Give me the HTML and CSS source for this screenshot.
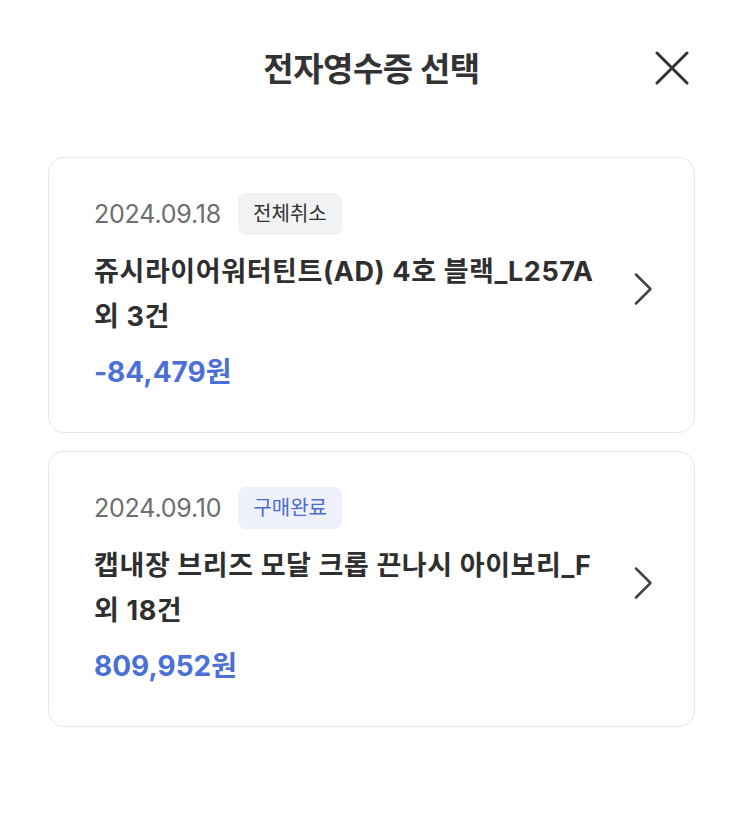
FILE: index.html
```html
<!DOCTYPE html>
<html lang="ko">
<head>
  <meta charset="UTF-8">
  <meta name="viewport" content="width=device-width, initial-scale=1.0">
  <title>전자영수증 선택</title>
  <link rel="stylesheet" href="styles.css">
</head>
<body>
  <header class="sheet-header">
    <h1 class="sheet-title">전자영수증 선택</h1>
    <button class="close-button" aria-label="닫기">
      <svg width="34" height="34" viewBox="0 0 34 34">
        <path d="M2 2 L32 32 M32 2 L2 32" stroke="#333" stroke-width="3" stroke-linecap="round" fill="none"/>
      </svg>
    </button>
  </header>

  <div class="receipt-list">
    <a class="receipt-card" href="#">
      <div class="receipt-info">
        <div class="receipt-meta">
          <span class="receipt-date">2024.09.18</span>
          <span class="badge badge-cancel">전체취소</span>
        </div>
        <p class="receipt-name">쥬시라이어워터틴트(AD) 4호 블랙_L257A <span class="receipt-count">외 3건</span></p>
        <p class="receipt-price">-84,479원</p>
      </div>
      <svg class="chevron" width="20" height="34" viewBox="0 0 20 34">
        <path d="M3 2.5 L17.5 17 L3 31.5" stroke="#444" stroke-width="2.5" stroke-linecap="round" stroke-linejoin="round" fill="none"/>
      </svg>
    </a>

    <a class="receipt-card" href="#">
      <div class="receipt-info">
        <div class="receipt-meta">
          <span class="receipt-date">2024.09.10</span>
          <span class="badge badge-done">구매완료</span>
        </div>
        <p class="receipt-name">캡내장 브리즈 모달 크롭 끈나시 아이보리_F <span class="receipt-count">외 18건</span></p>
        <p class="receipt-price">809,952원</p>
      </div>
      <svg class="chevron" width="20" height="34" viewBox="0 0 20 34">
        <path d="M3 2.5 L17.5 17 L3 31.5" stroke="#444" stroke-width="2.5" stroke-linecap="round" stroke-linejoin="round" fill="none"/>
      </svg>
    </a>
  </div>
</body>
</html>
```

FILE: styles.css
```css
* {
  margin: 0;
  padding: 0;
  box-sizing: border-box;
}

body {
  font-family: Inter, "Noto Sans CJK KR", sans-serif;
  background: #fff;
  color: #2b2b2b;
  padding: 0 48px;
}

.sheet-header {
  height: 136px;
  display: flex;
  align-items: center;
  justify-content: center;
  position: relative;
}

.sheet-title {
  font-size: 33px;
  font-weight: 700;
  color: #333;
  letter-spacing: -0.5px;
  margin-top: -2px;
}

.close-button {
  position: absolute;
  right: 6px;
  top: 51px;
  border: none;
  background: none;
  display: flex;
  cursor: pointer;
}

.receipt-list {
  display: flex;
  flex-direction: column;
  gap: 18px;
  margin-top: 21px;
}

.receipt-card {
  display: flex;
  align-items: center;
  gap: 18px;
  padding: 35px 41px 42px 45px;
  border: 1px solid #e8e8ea;
  border-radius: 16px;
  text-decoration: none;
  color: inherit;
}

.receipt-info {
  flex: 1;
}

.receipt-meta {
  display: flex;
  align-items: center;
  gap: 17px;
  margin-bottom: 14px;
}

.receipt-date {
  font-size: 25px;
  color: #6e6e6e;
  letter-spacing: -0.2px;
}

.badge {
  font-size: 20px;
  padding: 0 15px;
  height: 42px;
  line-height: 42px;
  border-radius: 8px;
}

.badge-cancel {
  background: #f1f2f4;
  color: #333;
}

.badge-done {
  background: #eef1fc;
  color: #4a6bd0;
}

.receipt-name {
  font-size: 27px;
  font-weight: 700;
  line-height: 45px;
  letter-spacing: 0.6px;
  color: #2f2f2f;
}

.receipt-count {
  white-space: nowrap;
}

.receipt-price {
  font-size: 28px;
  font-weight: 700;
  line-height: 36px;
  color: #4c6fd6;
  margin-top: 15px;
}

.chevron {
  flex-shrink: 0;
  margin-top: -5px;
}
```
